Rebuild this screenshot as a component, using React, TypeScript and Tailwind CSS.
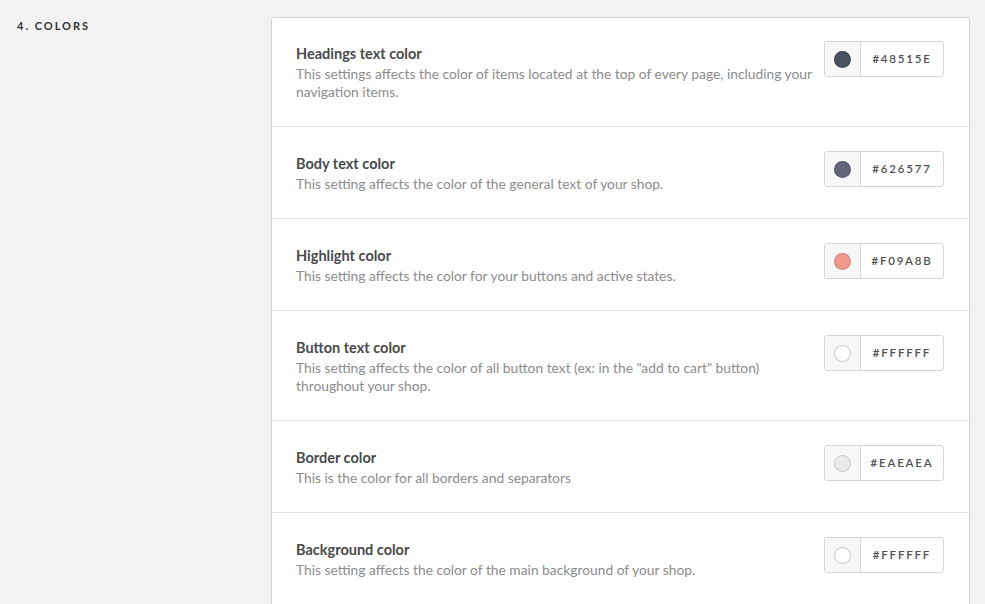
import React from "react";

interface ColorSetting {
  title: string;
  description: string;
  value: string;
  swatch: string;
}

const settings: ColorSetting[] = [
  {
    title: "Headings text color",
    description:
      "This settings affects the color of items located at the top of every page, including your navigation items.",
    value: "#48515E",
    swatch: "#48515E",
  },
  {
    title: "Body text color",
    description: "This setting affects the color of the general text of your shop.",
    value: "#626577",
    swatch: "#626577",
  },
  {
    title: "Highlight color",
    description: "This setting affects the color for your buttons and active states.",
    value: "#F09A8B",
    swatch: "#F09A8B",
  },
  {
    title: "Button text color",
    description:
      'This setting affects the color of all button text (ex: in the "add to cart" button) throughout your shop.',
    value: "#FFFFFF",
    swatch: "#FFFFFF",
  },
  {
    title: "Border color",
    description: "This is the color for all borders and separators",
    value: "#EAEAEA",
    swatch: "#EAEAEA",
  },
  {
    title: "Background color",
    description: "This setting affects the color of the main background of your shop.",
    value: "#FFFFFF",
    swatch: "#FFFFFF",
  },
];

function ColorPicker({ value, swatch }: { value: string; swatch: string }) {
  const light = swatch === "#FFFFFF" || swatch === "#EAEAEA";
  return (
    <div className="-mt-[3px] flex h-[36px] w-[120px] shrink-0 overflow-hidden rounded-[3px] border border-[#d6d6d6] bg-white">
      <div className="flex w-[36px] items-center justify-center border-r border-[#d6d6d6] bg-[#f7f7f7]">
        <span
          className="block h-[17px] w-[17px] rounded-full border"
          style={{ backgroundColor: swatch, borderColor: light ? "#c4c4c4" : "rgba(0,0,0,0.15)" }}
        />
      </div>
      <div className="flex flex-1 items-center justify-center text-[11.5px] font-semibold tracking-[1.8px] text-[#505050]">
        {value}
      </div>
    </div>
  );
}

export default function App() {
  return (
    <div
      className="flex min-h-[604px] w-full bg-[#f2f2f2] text-[#4a4a4a]"
      style={{ fontFamily: "Lato, 'Open Sans', sans-serif" }}
    >
      <div className="w-[271px] shrink-0 pl-[17px] pt-[19px]">
        <h2 className="text-[11px] font-bold uppercase leading-[14px] tracking-[2px] text-[#333]">4. Colors</h2>
      </div>
      <div className="mt-[17px] w-[699px] self-start rounded-t-[3px] border border-[#d4d4d4] bg-white">
        {settings.map((s, i) => (
          <div
            key={s.title}
            className={`flex items-start gap-[10px] pl-[24px] pr-[25px] pb-[25px] ${i === 0 ? "pt-[26px]" : "pt-[27px]"} ${
              i < settings.length - 1 ? "border-b border-[#e3e3e3]" : ""
            }`}
          >
            <div className="flex-1">
              <div className="text-[14.5px] font-bold leading-[20px] text-[#4a4a4a]">{s.title}</div>
              <p className="mt-[1px] text-[13.8px] leading-[18px] text-[#8c8c8c]">{s.description}</p>
            </div>
            <ColorPicker value={s.value} swatch={s.swatch} />
          </div>
        ))}
      </div>
    </div>
  );
}
